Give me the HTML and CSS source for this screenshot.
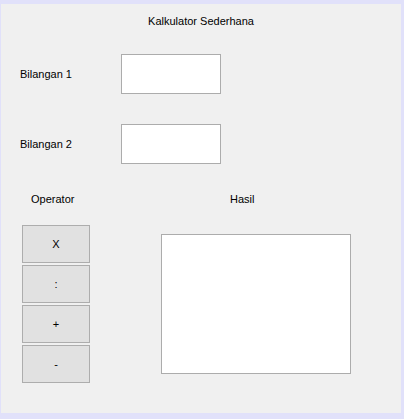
FILE: index.html
```html
<!DOCTYPE html>
<html>
<head>
<meta charset="utf-8">
<link rel="stylesheet" href="styles.css">
</head>
<body>
<div class="panel">
  <div class="title">Kalkulator Sederhana</div>
  <div class="row row1">
    <span class="label">Bilangan 1</span>
    <div class="input"></div>
  </div>
  <div class="row row2">
    <span class="label">Bilangan 2</span>
    <div class="input"></div>
  </div>
  <div class="bottom">
    <div class="ops">
      <div class="cap op-cap">Operator</div>
      <div class="btns">
        <div class="btn">X</div>
        <div class="btn">:</div>
        <div class="btn">+</div>
        <div class="btn">-</div>
      </div>
    </div>
    <div class="res">
      <div class="cap res-cap">Hasil</div>
      <div class="result"></div>
    </div>
  </div>
</div>
</body>
</html>
```
FILE: styles.css
```css
html, body {
  margin: 0;
  padding: 0;
}
body {
  background: #e1e1fa;
  width: 404px;
  height: 419px;
  overflow: hidden;
  font-family: "Liberation Sans", Arial, sans-serif;
  font-size: 11px;
  color: #000;
}
.panel {
  box-sizing: border-box;
  width: 400px;
  height: 409px;
  margin: 4px 0 0 1px;
  background: #f0f0f0;
  padding-top: 10px;
  display: flex;
  flex-direction: column;
}
.title {
  line-height: 14px;
  text-align: center;
}
.row {
  display: flex;
  align-items: center;
  padding-left: 19px;
}
.row1 { margin-top: 26px; }
.row2 { margin-top: 30px; }
.label {
  width: 101px;
  line-height: 14px;
}
.input {
  box-sizing: border-box;
  width: 100px;
  height: 40px;
  background: #fff;
  border: 1px solid #acacac;
}
.bottom {
  display: flex;
  margin-top: 28px;
}
.cap {
  line-height: 14px;
}
.ops {
  margin-left: 21px;
  width: 68px;
  display: flex;
  flex-direction: column;
}
.op-cap {
  padding-left: 9px;
  white-space: nowrap;
}
.btns {
  margin-top: 19px;
  display: flex;
  flex-direction: column;
  gap: 2px;
}
.btn {
  box-sizing: border-box;
  height: 38px;
  background: #e1e1e1;
  border: 1px solid #adadad;
  display: flex;
  align-items: center;
  justify-content: center;
}
.res {
  margin-left: 71px;
  display: flex;
  flex-direction: column;
}
.res-cap {
  padding-left: 69px;
}
.result {
  box-sizing: border-box;
  margin-top: 28px;
  width: 190px;
  height: 140px;
  background: #fff;
  border: 1px solid #acacac;
}
```
